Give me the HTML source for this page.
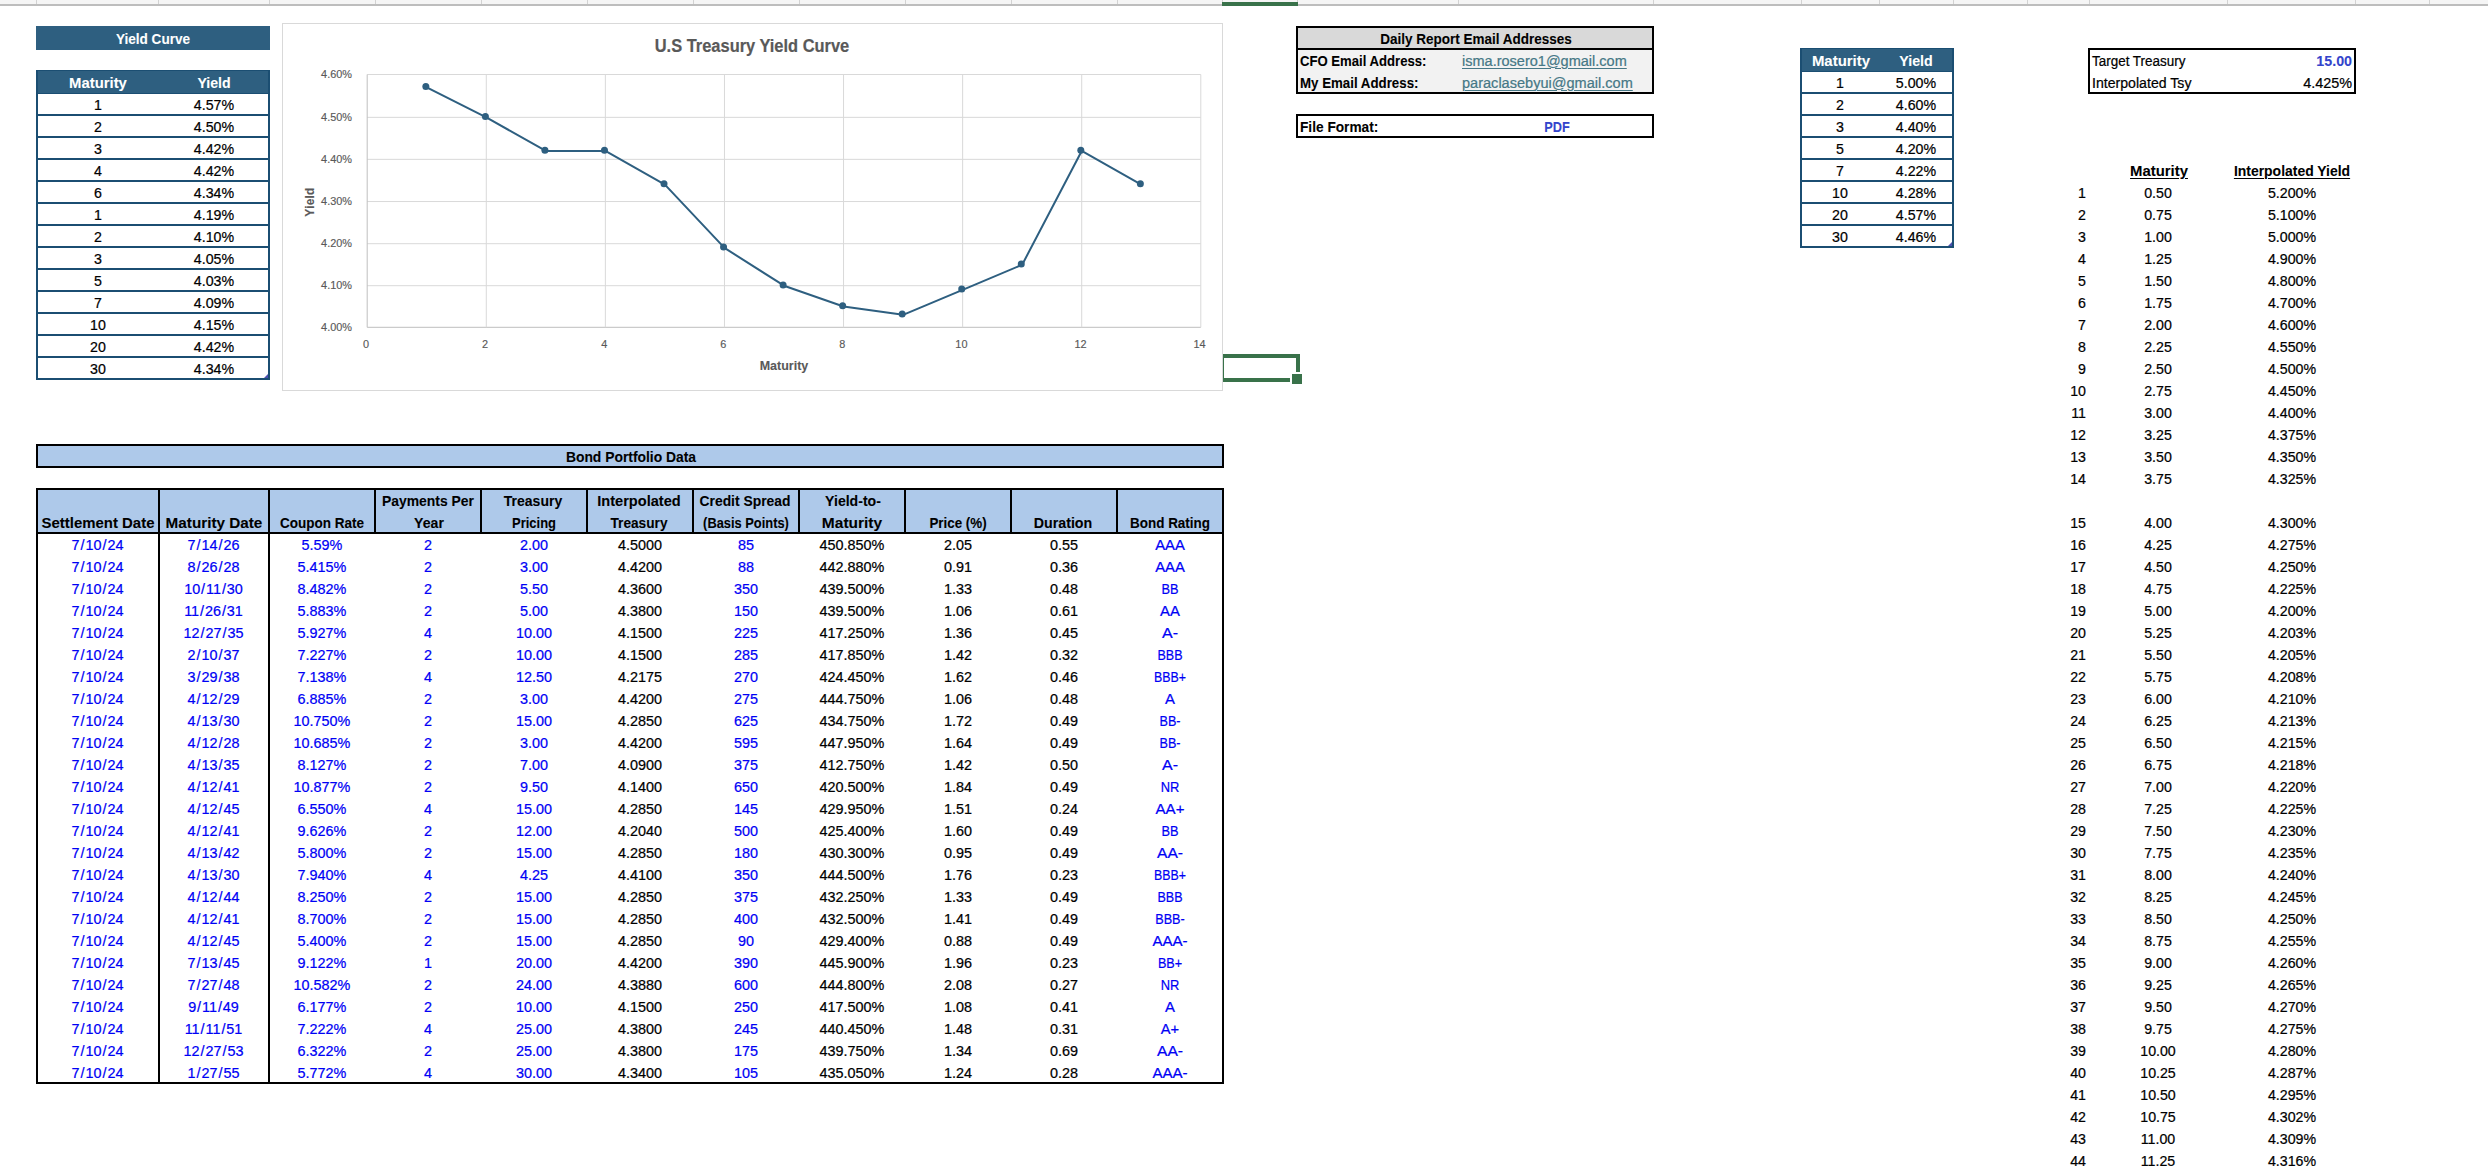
<!DOCTYPE html>
<html><head><meta charset="utf-8"><title>Sheet</title><style>
html,body{margin:0;padding:0;background:#fff}
html{width:2488px;height:1168px;overflow:hidden}
#sheet{position:absolute;left:0;top:0;width:2488px;height:1168px;overflow:hidden;contain:strict}
body{width:2488px;height:1168px;position:relative;overflow:hidden;font-family:"Liberation Sans",sans-serif;color:#000}
.r{position:absolute}
.t{position:absolute;height:22px;line-height:22px;white-space:nowrap;font-size:14.2px;-webkit-text-stroke:0.22px currentColor}
.a{font-size:14.9px}
.ab{font-size:14.9px;font-weight:bold;-webkit-text-stroke:0.08px currentColor}
.c{font-size:14.4px}
.cb{font-size:14.4px;font-weight:bold;-webkit-text-stroke:0.08px currentColor}
.ct{font-size:18.3px;font-weight:bold;color:#595959;-webkit-text-stroke:0.2px currentColor}
.cax{font-size:10.9px;color:#595959;-webkit-text-stroke:0.15px currentColor}
.cal{font-size:12px;font-weight:bold;color:#595959;-webkit-text-stroke:0.1px currentColor}
.s{margin:0 0.95px}
u{text-decoration-thickness:1px;text-underline-offset:2px}
</style></head><body><div id="sheet">
<div class="r" style="left:0.00px;top:0.00px;width:2488.00px;height:4.00px;background:#f5f5f5"></div>
<div class="r" style="left:0.00px;top:4.00px;width:2488.00px;height:1.50px;background:#bdbdbd"></div>
<div class="r" style="left:36.00px;top:0.00px;width:1.00px;height:4.00px;background:#d2d2d2"></div>
<div class="r" style="left:158.00px;top:0.00px;width:1.00px;height:4.00px;background:#d2d2d2"></div>
<div class="r" style="left:269.00px;top:0.00px;width:1.00px;height:4.00px;background:#d2d2d2"></div>
<div class="r" style="left:375.00px;top:0.00px;width:1.00px;height:4.00px;background:#d2d2d2"></div>
<div class="r" style="left:481.00px;top:0.00px;width:1.00px;height:4.00px;background:#d2d2d2"></div>
<div class="r" style="left:587.00px;top:0.00px;width:1.00px;height:4.00px;background:#d2d2d2"></div>
<div class="r" style="left:693.00px;top:0.00px;width:1.00px;height:4.00px;background:#d2d2d2"></div>
<div class="r" style="left:799.00px;top:0.00px;width:1.00px;height:4.00px;background:#d2d2d2"></div>
<div class="r" style="left:905.00px;top:0.00px;width:1.00px;height:4.00px;background:#d2d2d2"></div>
<div class="r" style="left:1011.00px;top:0.00px;width:1.00px;height:4.00px;background:#d2d2d2"></div>
<div class="r" style="left:1117.00px;top:0.00px;width:1.00px;height:4.00px;background:#d2d2d2"></div>
<div class="r" style="left:1222.00px;top:0.00px;width:1.00px;height:4.00px;background:#d2d2d2"></div>
<div class="r" style="left:1296.50px;top:0.00px;width:1.00px;height:4.00px;background:#d2d2d2"></div>
<div class="r" style="left:1458.00px;top:0.00px;width:1.00px;height:4.00px;background:#d2d2d2"></div>
<div class="r" style="left:1653.00px;top:0.00px;width:1.00px;height:4.00px;background:#d2d2d2"></div>
<div class="r" style="left:1800.50px;top:0.00px;width:1.00px;height:4.00px;background:#d2d2d2"></div>
<div class="r" style="left:1878.50px;top:0.00px;width:1.00px;height:4.00px;background:#d2d2d2"></div>
<div class="r" style="left:1952.50px;top:0.00px;width:1.00px;height:4.00px;background:#d2d2d2"></div>
<div class="r" style="left:2026.50px;top:0.00px;width:1.00px;height:4.00px;background:#d2d2d2"></div>
<div class="r" style="left:2088.50px;top:0.00px;width:1.00px;height:4.00px;background:#d2d2d2"></div>
<div class="r" style="left:2226.50px;top:0.00px;width:1.00px;height:4.00px;background:#d2d2d2"></div>
<div class="r" style="left:2354.50px;top:0.00px;width:1.00px;height:4.00px;background:#d2d2d2"></div>
<div class="r" style="left:2428.50px;top:0.00px;width:1.00px;height:4.00px;background:#d2d2d2"></div>
<div class="r" style="left:1222.00px;top:2.00px;width:76.00px;height:3.50px;background:#39724a"></div>
<div class="r" style="left:36.00px;top:26.00px;width:234.00px;height:24.00px;background:#2e5f80"></div>
<div class="t ab" style="left:-47.00px;top:27.80px;width:400px;text-align:center;color:#fff;transform:scaleX(0.9120);transform-origin:center center">Yield Curve</div>
<div class="r" style="left:36.00px;top:70.00px;width:234.00px;height:24.00px;background:#1b4e72"></div>
<div class="r" style="left:38.00px;top:71.00px;width:230.00px;height:22.00px;background:#2e5f80"></div>
<div class="t ab" style="left:-101.80px;top:71.80px;width:400px;text-align:center;color:#fff;transform:scaleX(0.9979);transform-origin:center center">Maturity</div>
<div class="t ab" style="left:14.10px;top:71.80px;width:400px;text-align:center;color:#fff;transform:scaleX(0.9462);transform-origin:center center">Yield</div>
<div class="r" style="left:36.00px;top:70.00px;width:2.00px;height:310.00px;background:#1b4e72"></div>
<div class="r" style="left:268.00px;top:70.00px;width:2.00px;height:310.00px;background:#1b4e72"></div>
<div class="t a" style="left:-101.80px;top:93.80px;width:400px;text-align:center;;transform:scaleX(0.9530);transform-origin:center center">1</div>
<div class="t a" style="left:14.10px;top:93.80px;width:400px;text-align:center;;transform:scaleX(0.9530);transform-origin:center center">4.57%</div>
<div class="r" style="left:36.00px;top:114.00px;width:234.00px;height:2.00px;background:#1b4e72"></div>
<div class="t a" style="left:-101.80px;top:115.80px;width:400px;text-align:center;;transform:scaleX(0.9530);transform-origin:center center">2</div>
<div class="t a" style="left:14.10px;top:115.80px;width:400px;text-align:center;;transform:scaleX(0.9530);transform-origin:center center">4.50%</div>
<div class="r" style="left:36.00px;top:136.00px;width:234.00px;height:2.00px;background:#1b4e72"></div>
<div class="t a" style="left:-101.80px;top:137.80px;width:400px;text-align:center;;transform:scaleX(0.9530);transform-origin:center center">3</div>
<div class="t a" style="left:14.10px;top:137.80px;width:400px;text-align:center;;transform:scaleX(0.9530);transform-origin:center center">4.42%</div>
<div class="r" style="left:36.00px;top:158.00px;width:234.00px;height:2.00px;background:#1b4e72"></div>
<div class="t a" style="left:-101.80px;top:159.80px;width:400px;text-align:center;;transform:scaleX(0.9530);transform-origin:center center">4</div>
<div class="t a" style="left:14.10px;top:159.80px;width:400px;text-align:center;;transform:scaleX(0.9530);transform-origin:center center">4.42%</div>
<div class="r" style="left:36.00px;top:180.00px;width:234.00px;height:2.00px;background:#1b4e72"></div>
<div class="t a" style="left:-101.80px;top:181.80px;width:400px;text-align:center;;transform:scaleX(0.9530);transform-origin:center center">6</div>
<div class="t a" style="left:14.10px;top:181.80px;width:400px;text-align:center;;transform:scaleX(0.9530);transform-origin:center center">4.34%</div>
<div class="r" style="left:36.00px;top:202.00px;width:234.00px;height:2.00px;background:#1b4e72"></div>
<div class="t a" style="left:-101.80px;top:203.80px;width:400px;text-align:center;;transform:scaleX(0.9530);transform-origin:center center">1</div>
<div class="t a" style="left:14.10px;top:203.80px;width:400px;text-align:center;;transform:scaleX(0.9530);transform-origin:center center">4.19%</div>
<div class="r" style="left:36.00px;top:224.00px;width:234.00px;height:2.00px;background:#1b4e72"></div>
<div class="t a" style="left:-101.80px;top:225.80px;width:400px;text-align:center;;transform:scaleX(0.9530);transform-origin:center center">2</div>
<div class="t a" style="left:14.10px;top:225.80px;width:400px;text-align:center;;transform:scaleX(0.9530);transform-origin:center center">4.10%</div>
<div class="r" style="left:36.00px;top:246.00px;width:234.00px;height:2.00px;background:#1b4e72"></div>
<div class="t a" style="left:-101.80px;top:247.80px;width:400px;text-align:center;;transform:scaleX(0.9530);transform-origin:center center">3</div>
<div class="t a" style="left:14.10px;top:247.80px;width:400px;text-align:center;;transform:scaleX(0.9530);transform-origin:center center">4.05%</div>
<div class="r" style="left:36.00px;top:268.00px;width:234.00px;height:2.00px;background:#1b4e72"></div>
<div class="t a" style="left:-101.80px;top:269.80px;width:400px;text-align:center;;transform:scaleX(0.9530);transform-origin:center center">5</div>
<div class="t a" style="left:14.10px;top:269.80px;width:400px;text-align:center;;transform:scaleX(0.9530);transform-origin:center center">4.03%</div>
<div class="r" style="left:36.00px;top:290.00px;width:234.00px;height:2.00px;background:#1b4e72"></div>
<div class="t a" style="left:-101.80px;top:291.80px;width:400px;text-align:center;;transform:scaleX(0.9530);transform-origin:center center">7</div>
<div class="t a" style="left:14.10px;top:291.80px;width:400px;text-align:center;;transform:scaleX(0.9530);transform-origin:center center">4.09%</div>
<div class="r" style="left:36.00px;top:312.00px;width:234.00px;height:2.00px;background:#1b4e72"></div>
<div class="t a" style="left:-101.80px;top:313.80px;width:400px;text-align:center;;transform:scaleX(0.9530);transform-origin:center center">10</div>
<div class="t a" style="left:14.10px;top:313.80px;width:400px;text-align:center;;transform:scaleX(0.9530);transform-origin:center center">4.15%</div>
<div class="r" style="left:36.00px;top:334.00px;width:234.00px;height:2.00px;background:#1b4e72"></div>
<div class="t a" style="left:-101.80px;top:335.80px;width:400px;text-align:center;;transform:scaleX(0.9530);transform-origin:center center">20</div>
<div class="t a" style="left:14.10px;top:335.80px;width:400px;text-align:center;;transform:scaleX(0.9530);transform-origin:center center">4.42%</div>
<div class="r" style="left:36.00px;top:356.00px;width:234.00px;height:2.00px;background:#1b4e72"></div>
<div class="t a" style="left:-101.80px;top:357.80px;width:400px;text-align:center;;transform:scaleX(0.9530);transform-origin:center center">30</div>
<div class="t a" style="left:14.10px;top:357.80px;width:400px;text-align:center;;transform:scaleX(0.9530);transform-origin:center center">4.34%</div>
<div class="r" style="left:36.00px;top:378.00px;width:234.00px;height:2.00px;background:#1b4e72"></div>
<div class="r" style="left:264.0px;top:374.0px;width:0;height:0;border-left:4px solid transparent;border-bottom:4px solid #4b4fb0"></div>
<div class="r" style="left:1800.00px;top:48.00px;width:154.00px;height:24.00px;background:#1b4e72"></div>
<div class="r" style="left:1802.00px;top:49.00px;width:150.00px;height:22.00px;background:#2e5f80"></div>
<div class="t ab" style="left:1640.70px;top:49.80px;width:400px;text-align:center;color:#fff;transform:scaleX(1.0049);transform-origin:center center">Maturity</div>
<div class="t ab" style="left:1716.00px;top:49.80px;width:400px;text-align:center;color:#fff;transform:scaleX(0.9550);transform-origin:center center">Yield</div>
<div class="r" style="left:1800.00px;top:48.00px;width:2.00px;height:200.00px;background:#1b4e72"></div>
<div class="r" style="left:1952.00px;top:48.00px;width:2.00px;height:200.00px;background:#1b4e72"></div>
<div class="t a" style="left:1639.80px;top:71.80px;width:400px;text-align:center;;transform:scaleX(0.9530);transform-origin:center center">1</div>
<div class="t a" style="left:1716.00px;top:71.80px;width:400px;text-align:center;;transform:scaleX(0.9530);transform-origin:center center">5.00%</div>
<div class="r" style="left:1800.00px;top:92.00px;width:154.00px;height:2.00px;background:#1b4e72"></div>
<div class="t a" style="left:1639.80px;top:93.80px;width:400px;text-align:center;;transform:scaleX(0.9530);transform-origin:center center">2</div>
<div class="t a" style="left:1716.00px;top:93.80px;width:400px;text-align:center;;transform:scaleX(0.9530);transform-origin:center center">4.60%</div>
<div class="r" style="left:1800.00px;top:114.00px;width:154.00px;height:2.00px;background:#1b4e72"></div>
<div class="t a" style="left:1639.80px;top:115.80px;width:400px;text-align:center;;transform:scaleX(0.9530);transform-origin:center center">3</div>
<div class="t a" style="left:1716.00px;top:115.80px;width:400px;text-align:center;;transform:scaleX(0.9530);transform-origin:center center">4.40%</div>
<div class="r" style="left:1800.00px;top:136.00px;width:154.00px;height:2.00px;background:#1b4e72"></div>
<div class="t a" style="left:1639.80px;top:137.80px;width:400px;text-align:center;;transform:scaleX(0.9530);transform-origin:center center">5</div>
<div class="t a" style="left:1716.00px;top:137.80px;width:400px;text-align:center;;transform:scaleX(0.9530);transform-origin:center center">4.20%</div>
<div class="r" style="left:1800.00px;top:158.00px;width:154.00px;height:2.00px;background:#1b4e72"></div>
<div class="t a" style="left:1639.80px;top:159.80px;width:400px;text-align:center;;transform:scaleX(0.9530);transform-origin:center center">7</div>
<div class="t a" style="left:1716.00px;top:159.80px;width:400px;text-align:center;;transform:scaleX(0.9530);transform-origin:center center">4.22%</div>
<div class="r" style="left:1800.00px;top:180.00px;width:154.00px;height:2.00px;background:#1b4e72"></div>
<div class="t a" style="left:1639.80px;top:181.80px;width:400px;text-align:center;;transform:scaleX(0.9530);transform-origin:center center">10</div>
<div class="t a" style="left:1716.00px;top:181.80px;width:400px;text-align:center;;transform:scaleX(0.9530);transform-origin:center center">4.28%</div>
<div class="r" style="left:1800.00px;top:202.00px;width:154.00px;height:2.00px;background:#1b4e72"></div>
<div class="t a" style="left:1639.80px;top:203.80px;width:400px;text-align:center;;transform:scaleX(0.9530);transform-origin:center center">20</div>
<div class="t a" style="left:1716.00px;top:203.80px;width:400px;text-align:center;;transform:scaleX(0.9530);transform-origin:center center">4.57%</div>
<div class="r" style="left:1800.00px;top:224.00px;width:154.00px;height:2.00px;background:#1b4e72"></div>
<div class="t a" style="left:1639.80px;top:225.80px;width:400px;text-align:center;;transform:scaleX(0.9530);transform-origin:center center">30</div>
<div class="t a" style="left:1716.00px;top:225.80px;width:400px;text-align:center;;transform:scaleX(0.9530);transform-origin:center center">4.46%</div>
<div class="r" style="left:1800.00px;top:246.00px;width:154.00px;height:2.00px;background:#1b4e72"></div>
<div class="r" style="left:1948.0px;top:242.0px;width:0;height:0;border-left:4px solid transparent;border-bottom:4px solid #4b4fb0"></div>
<svg class="r" style="left:0;top:0" width="2488" height="400" viewBox="0 0 2488 400"><rect x="282.5" y="23.5" width="940.0" height="367.0" fill="#fff" stroke="#d9d9d9" stroke-width="1"/><line x1="367.2" y1="74.50" x2="1200.8" y2="74.50" stroke="#d9d9d9" stroke-width="1"/><line x1="367.2" y1="117.35" x2="1200.8" y2="117.35" stroke="#d9d9d9" stroke-width="1"/><line x1="367.2" y1="159.35" x2="1200.8" y2="159.35" stroke="#d9d9d9" stroke-width="1"/><line x1="367.2" y1="201.55" x2="1200.8" y2="201.55" stroke="#d9d9d9" stroke-width="1"/><line x1="367.2" y1="243.70" x2="1200.8" y2="243.70" stroke="#d9d9d9" stroke-width="1"/><line x1="367.2" y1="285.70" x2="1200.8" y2="285.70" stroke="#d9d9d9" stroke-width="1"/><line x1="367.2" y1="327.30" x2="1200.8" y2="327.30" stroke="#bfbfbf" stroke-width="1"/><line x1="367.20" y1="74.5" x2="367.20" y2="327.3" stroke="#bfbfbf" stroke-width="1"/><line x1="486.29" y1="74.5" x2="486.29" y2="327.3" stroke="#d9d9d9" stroke-width="1"/><line x1="605.37" y1="74.5" x2="605.37" y2="327.3" stroke="#d9d9d9" stroke-width="1"/><line x1="724.46" y1="74.5" x2="724.46" y2="327.3" stroke="#d9d9d9" stroke-width="1"/><line x1="843.54" y1="74.5" x2="843.54" y2="327.3" stroke="#d9d9d9" stroke-width="1"/><line x1="962.63" y1="74.5" x2="962.63" y2="327.3" stroke="#d9d9d9" stroke-width="1"/><line x1="1081.71" y1="74.5" x2="1081.71" y2="327.3" stroke="#d9d9d9" stroke-width="1"/><line x1="1200.80" y1="74.5" x2="1200.80" y2="327.3" stroke="#d9d9d9" stroke-width="1"/><polyline points="426.74,87.35 486.29,117.35 545.83,150.95 605.37,150.95 664.91,184.67 724.46,247.90 784.00,285.70 843.54,306.50 903.09,314.82 962.63,289.86 1022.17,264.70 1081.71,150.95 1141.26,184.67" fill="none" stroke="#2e5f80" stroke-width="2" stroke-linejoin="round" stroke-linecap="round"/><circle cx="425.84" cy="86.55" r="3.5" fill="#2e5f80"/><circle cx="485.39" cy="116.55" r="3.5" fill="#2e5f80"/><circle cx="544.93" cy="150.15" r="3.5" fill="#2e5f80"/><circle cx="604.47" cy="150.15" r="3.5" fill="#2e5f80"/><circle cx="664.01" cy="183.87" r="3.5" fill="#2e5f80"/><circle cx="723.56" cy="247.10" r="3.5" fill="#2e5f80"/><circle cx="783.10" cy="284.90" r="3.5" fill="#2e5f80"/><circle cx="842.64" cy="305.70" r="3.5" fill="#2e5f80"/><circle cx="902.19" cy="314.02" r="3.5" fill="#2e5f80"/><circle cx="961.73" cy="289.06" r="3.5" fill="#2e5f80"/><circle cx="1021.27" cy="263.90" r="3.5" fill="#2e5f80"/><circle cx="1080.81" cy="150.15" r="3.5" fill="#2e5f80"/><circle cx="1140.36" cy="183.87" r="3.5" fill="#2e5f80"/></svg>
<div class="t ct" style="left:551.70px;top:34.60px;width:400px;text-align:center;;transform:scaleX(0.8986);transform-origin:center center">U.S Treasury Yield Curve</div>
<div class="t cax" style="left:252.00px;top:63.20px;width:100px;text-align:right;">4.60%</div>
<div class="t cax" style="left:252.00px;top:106.05px;width:100px;text-align:right;">4.50%</div>
<div class="t cax" style="left:252.00px;top:148.05px;width:100px;text-align:right;">4.40%</div>
<div class="t cax" style="left:252.00px;top:190.25px;width:100px;text-align:right;">4.30%</div>
<div class="t cax" style="left:252.00px;top:232.40px;width:100px;text-align:right;">4.20%</div>
<div class="t cax" style="left:252.00px;top:274.40px;width:100px;text-align:right;">4.10%</div>
<div class="t cax" style="left:252.00px;top:316.00px;width:100px;text-align:right;">4.00%</div>
<div class="t cax" style="left:336.00px;top:333.00px;width:60px;text-align:center;">0</div>
<div class="t cax" style="left:455.09px;top:333.00px;width:60px;text-align:center;">2</div>
<div class="t cax" style="left:574.17px;top:333.00px;width:60px;text-align:center;">4</div>
<div class="t cax" style="left:693.26px;top:333.00px;width:60px;text-align:center;">6</div>
<div class="t cax" style="left:812.34px;top:333.00px;width:60px;text-align:center;">8</div>
<div class="t cax" style="left:931.43px;top:333.00px;width:60px;text-align:center;">10</div>
<div class="t cax" style="left:1050.51px;top:333.00px;width:60px;text-align:center;">12</div>
<div class="t cax" style="left:1169.60px;top:333.00px;width:60px;text-align:center;">14</div>
<div class="t cal" style="left:733.50px;top:354.50px;width:100px;text-align:center;;transform:scaleX(1.0400);transform-origin:center center">Maturity</div>
<div class="t cal" style="left:259.5px;top:190.5px;width:100px;text-align:center;transform:rotate(-90deg);letter-spacing:0.2px">Yield</div>
<div class="r" style="left:1223.00px;top:354.00px;width:77.00px;height:3.70px;background:#39724a"></div>
<div class="r" style="left:1296.20px;top:354.00px;width:3.80px;height:18.00px;background:#39724a"></div>
<div class="r" style="left:1223.00px;top:378.20px;width:67.00px;height:3.80px;background:#39724a"></div>
<div class="r" style="left:1223.00px;top:354.00px;width:1.00px;height:28.00px;background:#39724a"></div>
<div class="r" style="left:1292.00px;top:374.00px;width:10.00px;height:10.00px;background:#39724a"></div>
<div class="r" style="left:1296.00px;top:26.00px;width:358.00px;height:68.00px;background:#f2f2f2;border:2px solid #000;box-sizing:border-box"></div>
<div class="r" style="left:1298.00px;top:28.00px;width:354.00px;height:20.00px;background:#d9d9d9"></div>
<div class="r" style="left:1298.00px;top:48.00px;width:354.00px;height:2.00px;background:#000"></div>
<div class="t ab" style="left:1275.50px;top:27.50px;width:400px;text-align:center;;transform:scaleX(0.9058);transform-origin:center center">Daily Report Email Addresses</div>
<div class="t ab" style="left:1300.00px;top:49.50px;width:400px;text-align:left;;transform:scaleX(0.8818);transform-origin:left center">CFO Email Address:</div>
<div class="t ab" style="left:1300.00px;top:71.50px;width:400px;text-align:left;;transform:scaleX(0.8930);transform-origin:left center">My Email Address:</div>
<div class="t a" style="left:1462.00px;top:49.50px;width:400px;text-align:left;color:#467886;transform:scaleX(0.9747);transform-origin:left center"><u>isma.rosero1@gmail.com</u></div>
<div class="t a" style="left:1462.00px;top:71.50px;width:400px;text-align:left;color:#467886;transform:scaleX(0.9767);transform-origin:left center"><u>paraclasebyui@gmail.com</u></div>
<div class="r" style="left:1296.00px;top:114.00px;width:358.00px;height:24.00px;background:#fff;border:2px solid #000;box-sizing:border-box"></div>
<div class="t ab" style="left:1300.00px;top:115.50px;width:400px;text-align:left;;transform:scaleX(0.9190);transform-origin:left center">File Format:</div>
<div class="t ab" style="left:1357.20px;top:115.50px;width:400px;text-align:center;color:#3344cc;transform:scaleX(0.8543);transform-origin:center center">PDF</div>
<div class="r" style="left:2088.00px;top:48.00px;width:268.00px;height:46.00px;background:#fff;border:2px solid #000;box-sizing:border-box"></div>
<div class="t a" style="left:2092.00px;top:49.50px;width:400px;text-align:left;;transform:scaleX(0.9029);transform-origin:left center">Target Treasury</div>
<div class="t a" style="left:2092.00px;top:71.50px;width:400px;text-align:left;;transform:scaleX(0.9484);transform-origin:left center">Interpolated Tsy</div>
<div class="t ab" style="left:1951.80px;top:49.50px;width:400px;text-align:right;color:#3344cc;transform:scaleX(0.9568);transform-origin:right center">15.00</div>
<div class="t a" style="left:1951.80px;top:71.50px;width:400px;text-align:right;;transform:scaleX(0.9654);transform-origin:right center">4.425%</div>
<div class="t ab" style="left:1959.00px;top:159.50px;width:400px;text-align:center;;transform:scaleX(0.9996);transform-origin:center center"><u>Maturity</u></div>
<div class="t ab" style="left:2092.00px;top:159.50px;width:400px;text-align:center;;transform:scaleX(0.9364);transform-origin:center center"><u>Interpolated Yield</u></div>
<div class="t a" style="left:1986.00px;top:181.70px;width:100px;text-align:right;;transform:scaleX(0.9530);transform-origin:right center">1</div>
<div class="t a" style="left:2107.80px;top:181.70px;width:100px;text-align:center;;transform:scaleX(0.9530);transform-origin:center center">0.50</div>
<div class="t a" style="left:2242.00px;top:181.70px;width:100px;text-align:center;;transform:scaleX(0.9530);transform-origin:center center">5.200%</div>
<div class="t a" style="left:1986.00px;top:203.70px;width:100px;text-align:right;;transform:scaleX(0.9530);transform-origin:right center">2</div>
<div class="t a" style="left:2107.80px;top:203.70px;width:100px;text-align:center;;transform:scaleX(0.9530);transform-origin:center center">0.75</div>
<div class="t a" style="left:2242.00px;top:203.70px;width:100px;text-align:center;;transform:scaleX(0.9530);transform-origin:center center">5.100%</div>
<div class="t a" style="left:1986.00px;top:225.70px;width:100px;text-align:right;;transform:scaleX(0.9530);transform-origin:right center">3</div>
<div class="t a" style="left:2107.80px;top:225.70px;width:100px;text-align:center;;transform:scaleX(0.9530);transform-origin:center center">1.00</div>
<div class="t a" style="left:2242.00px;top:225.70px;width:100px;text-align:center;;transform:scaleX(0.9530);transform-origin:center center">5.000%</div>
<div class="t a" style="left:1986.00px;top:247.70px;width:100px;text-align:right;;transform:scaleX(0.9530);transform-origin:right center">4</div>
<div class="t a" style="left:2107.80px;top:247.70px;width:100px;text-align:center;;transform:scaleX(0.9530);transform-origin:center center">1.25</div>
<div class="t a" style="left:2242.00px;top:247.70px;width:100px;text-align:center;;transform:scaleX(0.9530);transform-origin:center center">4.900%</div>
<div class="t a" style="left:1986.00px;top:269.70px;width:100px;text-align:right;;transform:scaleX(0.9530);transform-origin:right center">5</div>
<div class="t a" style="left:2107.80px;top:269.70px;width:100px;text-align:center;;transform:scaleX(0.9530);transform-origin:center center">1.50</div>
<div class="t a" style="left:2242.00px;top:269.70px;width:100px;text-align:center;;transform:scaleX(0.9530);transform-origin:center center">4.800%</div>
<div class="t a" style="left:1986.00px;top:291.70px;width:100px;text-align:right;;transform:scaleX(0.9530);transform-origin:right center">6</div>
<div class="t a" style="left:2107.80px;top:291.70px;width:100px;text-align:center;;transform:scaleX(0.9530);transform-origin:center center">1.75</div>
<div class="t a" style="left:2242.00px;top:291.70px;width:100px;text-align:center;;transform:scaleX(0.9530);transform-origin:center center">4.700%</div>
<div class="t a" style="left:1986.00px;top:313.70px;width:100px;text-align:right;;transform:scaleX(0.9530);transform-origin:right center">7</div>
<div class="t a" style="left:2107.80px;top:313.70px;width:100px;text-align:center;;transform:scaleX(0.9530);transform-origin:center center">2.00</div>
<div class="t a" style="left:2242.00px;top:313.70px;width:100px;text-align:center;;transform:scaleX(0.9530);transform-origin:center center">4.600%</div>
<div class="t a" style="left:1986.00px;top:335.70px;width:100px;text-align:right;;transform:scaleX(0.9530);transform-origin:right center">8</div>
<div class="t a" style="left:2107.80px;top:335.70px;width:100px;text-align:center;;transform:scaleX(0.9530);transform-origin:center center">2.25</div>
<div class="t a" style="left:2242.00px;top:335.70px;width:100px;text-align:center;;transform:scaleX(0.9530);transform-origin:center center">4.550%</div>
<div class="t a" style="left:1986.00px;top:357.70px;width:100px;text-align:right;;transform:scaleX(0.9530);transform-origin:right center">9</div>
<div class="t a" style="left:2107.80px;top:357.70px;width:100px;text-align:center;;transform:scaleX(0.9530);transform-origin:center center">2.50</div>
<div class="t a" style="left:2242.00px;top:357.70px;width:100px;text-align:center;;transform:scaleX(0.9530);transform-origin:center center">4.500%</div>
<div class="t a" style="left:1986.00px;top:379.70px;width:100px;text-align:right;;transform:scaleX(0.9530);transform-origin:right center">10</div>
<div class="t a" style="left:2107.80px;top:379.70px;width:100px;text-align:center;;transform:scaleX(0.9530);transform-origin:center center">2.75</div>
<div class="t a" style="left:2242.00px;top:379.70px;width:100px;text-align:center;;transform:scaleX(0.9530);transform-origin:center center">4.450%</div>
<div class="t a" style="left:1986.00px;top:401.70px;width:100px;text-align:right;;transform:scaleX(0.9530);transform-origin:right center">11</div>
<div class="t a" style="left:2107.80px;top:401.70px;width:100px;text-align:center;;transform:scaleX(0.9530);transform-origin:center center">3.00</div>
<div class="t a" style="left:2242.00px;top:401.70px;width:100px;text-align:center;;transform:scaleX(0.9530);transform-origin:center center">4.400%</div>
<div class="t a" style="left:1986.00px;top:423.70px;width:100px;text-align:right;;transform:scaleX(0.9530);transform-origin:right center">12</div>
<div class="t a" style="left:2107.80px;top:423.70px;width:100px;text-align:center;;transform:scaleX(0.9530);transform-origin:center center">3.25</div>
<div class="t a" style="left:2242.00px;top:423.70px;width:100px;text-align:center;;transform:scaleX(0.9530);transform-origin:center center">4.375%</div>
<div class="t a" style="left:1986.00px;top:445.70px;width:100px;text-align:right;;transform:scaleX(0.9530);transform-origin:right center">13</div>
<div class="t a" style="left:2107.80px;top:445.70px;width:100px;text-align:center;;transform:scaleX(0.9530);transform-origin:center center">3.50</div>
<div class="t a" style="left:2242.00px;top:445.70px;width:100px;text-align:center;;transform:scaleX(0.9530);transform-origin:center center">4.350%</div>
<div class="t a" style="left:1986.00px;top:467.70px;width:100px;text-align:right;;transform:scaleX(0.9530);transform-origin:right center">14</div>
<div class="t a" style="left:2107.80px;top:467.70px;width:100px;text-align:center;;transform:scaleX(0.9530);transform-origin:center center">3.75</div>
<div class="t a" style="left:2242.00px;top:467.70px;width:100px;text-align:center;;transform:scaleX(0.9530);transform-origin:center center">4.325%</div>
<div class="t a" style="left:1986.00px;top:511.70px;width:100px;text-align:right;;transform:scaleX(0.9530);transform-origin:right center">15</div>
<div class="t a" style="left:2107.80px;top:511.70px;width:100px;text-align:center;;transform:scaleX(0.9530);transform-origin:center center">4.00</div>
<div class="t a" style="left:2242.00px;top:511.70px;width:100px;text-align:center;;transform:scaleX(0.9530);transform-origin:center center">4.300%</div>
<div class="t a" style="left:1986.00px;top:533.70px;width:100px;text-align:right;;transform:scaleX(0.9530);transform-origin:right center">16</div>
<div class="t a" style="left:2107.80px;top:533.70px;width:100px;text-align:center;;transform:scaleX(0.9530);transform-origin:center center">4.25</div>
<div class="t a" style="left:2242.00px;top:533.70px;width:100px;text-align:center;;transform:scaleX(0.9530);transform-origin:center center">4.275%</div>
<div class="t a" style="left:1986.00px;top:555.70px;width:100px;text-align:right;;transform:scaleX(0.9530);transform-origin:right center">17</div>
<div class="t a" style="left:2107.80px;top:555.70px;width:100px;text-align:center;;transform:scaleX(0.9530);transform-origin:center center">4.50</div>
<div class="t a" style="left:2242.00px;top:555.70px;width:100px;text-align:center;;transform:scaleX(0.9530);transform-origin:center center">4.250%</div>
<div class="t a" style="left:1986.00px;top:577.70px;width:100px;text-align:right;;transform:scaleX(0.9530);transform-origin:right center">18</div>
<div class="t a" style="left:2107.80px;top:577.70px;width:100px;text-align:center;;transform:scaleX(0.9530);transform-origin:center center">4.75</div>
<div class="t a" style="left:2242.00px;top:577.70px;width:100px;text-align:center;;transform:scaleX(0.9530);transform-origin:center center">4.225%</div>
<div class="t a" style="left:1986.00px;top:599.70px;width:100px;text-align:right;;transform:scaleX(0.9530);transform-origin:right center">19</div>
<div class="t a" style="left:2107.80px;top:599.70px;width:100px;text-align:center;;transform:scaleX(0.9530);transform-origin:center center">5.00</div>
<div class="t a" style="left:2242.00px;top:599.70px;width:100px;text-align:center;;transform:scaleX(0.9530);transform-origin:center center">4.200%</div>
<div class="t a" style="left:1986.00px;top:621.70px;width:100px;text-align:right;;transform:scaleX(0.9530);transform-origin:right center">20</div>
<div class="t a" style="left:2107.80px;top:621.70px;width:100px;text-align:center;;transform:scaleX(0.9530);transform-origin:center center">5.25</div>
<div class="t a" style="left:2242.00px;top:621.70px;width:100px;text-align:center;;transform:scaleX(0.9530);transform-origin:center center">4.203%</div>
<div class="t a" style="left:1986.00px;top:643.70px;width:100px;text-align:right;;transform:scaleX(0.9530);transform-origin:right center">21</div>
<div class="t a" style="left:2107.80px;top:643.70px;width:100px;text-align:center;;transform:scaleX(0.9530);transform-origin:center center">5.50</div>
<div class="t a" style="left:2242.00px;top:643.70px;width:100px;text-align:center;;transform:scaleX(0.9530);transform-origin:center center">4.205%</div>
<div class="t a" style="left:1986.00px;top:665.70px;width:100px;text-align:right;;transform:scaleX(0.9530);transform-origin:right center">22</div>
<div class="t a" style="left:2107.80px;top:665.70px;width:100px;text-align:center;;transform:scaleX(0.9530);transform-origin:center center">5.75</div>
<div class="t a" style="left:2242.00px;top:665.70px;width:100px;text-align:center;;transform:scaleX(0.9530);transform-origin:center center">4.208%</div>
<div class="t a" style="left:1986.00px;top:687.70px;width:100px;text-align:right;;transform:scaleX(0.9530);transform-origin:right center">23</div>
<div class="t a" style="left:2107.80px;top:687.70px;width:100px;text-align:center;;transform:scaleX(0.9530);transform-origin:center center">6.00</div>
<div class="t a" style="left:2242.00px;top:687.70px;width:100px;text-align:center;;transform:scaleX(0.9530);transform-origin:center center">4.210%</div>
<div class="t a" style="left:1986.00px;top:709.70px;width:100px;text-align:right;;transform:scaleX(0.9530);transform-origin:right center">24</div>
<div class="t a" style="left:2107.80px;top:709.70px;width:100px;text-align:center;;transform:scaleX(0.9530);transform-origin:center center">6.25</div>
<div class="t a" style="left:2242.00px;top:709.70px;width:100px;text-align:center;;transform:scaleX(0.9530);transform-origin:center center">4.213%</div>
<div class="t a" style="left:1986.00px;top:731.70px;width:100px;text-align:right;;transform:scaleX(0.9530);transform-origin:right center">25</div>
<div class="t a" style="left:2107.80px;top:731.70px;width:100px;text-align:center;;transform:scaleX(0.9530);transform-origin:center center">6.50</div>
<div class="t a" style="left:2242.00px;top:731.70px;width:100px;text-align:center;;transform:scaleX(0.9530);transform-origin:center center">4.215%</div>
<div class="t a" style="left:1986.00px;top:753.70px;width:100px;text-align:right;;transform:scaleX(0.9530);transform-origin:right center">26</div>
<div class="t a" style="left:2107.80px;top:753.70px;width:100px;text-align:center;;transform:scaleX(0.9530);transform-origin:center center">6.75</div>
<div class="t a" style="left:2242.00px;top:753.70px;width:100px;text-align:center;;transform:scaleX(0.9530);transform-origin:center center">4.218%</div>
<div class="t a" style="left:1986.00px;top:775.70px;width:100px;text-align:right;;transform:scaleX(0.9530);transform-origin:right center">27</div>
<div class="t a" style="left:2107.80px;top:775.70px;width:100px;text-align:center;;transform:scaleX(0.9530);transform-origin:center center">7.00</div>
<div class="t a" style="left:2242.00px;top:775.70px;width:100px;text-align:center;;transform:scaleX(0.9530);transform-origin:center center">4.220%</div>
<div class="t a" style="left:1986.00px;top:797.70px;width:100px;text-align:right;;transform:scaleX(0.9530);transform-origin:right center">28</div>
<div class="t a" style="left:2107.80px;top:797.70px;width:100px;text-align:center;;transform:scaleX(0.9530);transform-origin:center center">7.25</div>
<div class="t a" style="left:2242.00px;top:797.70px;width:100px;text-align:center;;transform:scaleX(0.9530);transform-origin:center center">4.225%</div>
<div class="t a" style="left:1986.00px;top:819.70px;width:100px;text-align:right;;transform:scaleX(0.9530);transform-origin:right center">29</div>
<div class="t a" style="left:2107.80px;top:819.70px;width:100px;text-align:center;;transform:scaleX(0.9530);transform-origin:center center">7.50</div>
<div class="t a" style="left:2242.00px;top:819.70px;width:100px;text-align:center;;transform:scaleX(0.9530);transform-origin:center center">4.230%</div>
<div class="t a" style="left:1986.00px;top:841.70px;width:100px;text-align:right;;transform:scaleX(0.9530);transform-origin:right center">30</div>
<div class="t a" style="left:2107.80px;top:841.70px;width:100px;text-align:center;;transform:scaleX(0.9530);transform-origin:center center">7.75</div>
<div class="t a" style="left:2242.00px;top:841.70px;width:100px;text-align:center;;transform:scaleX(0.9530);transform-origin:center center">4.235%</div>
<div class="t a" style="left:1986.00px;top:863.70px;width:100px;text-align:right;;transform:scaleX(0.9530);transform-origin:right center">31</div>
<div class="t a" style="left:2107.80px;top:863.70px;width:100px;text-align:center;;transform:scaleX(0.9530);transform-origin:center center">8.00</div>
<div class="t a" style="left:2242.00px;top:863.70px;width:100px;text-align:center;;transform:scaleX(0.9530);transform-origin:center center">4.240%</div>
<div class="t a" style="left:1986.00px;top:885.70px;width:100px;text-align:right;;transform:scaleX(0.9530);transform-origin:right center">32</div>
<div class="t a" style="left:2107.80px;top:885.70px;width:100px;text-align:center;;transform:scaleX(0.9530);transform-origin:center center">8.25</div>
<div class="t a" style="left:2242.00px;top:885.70px;width:100px;text-align:center;;transform:scaleX(0.9530);transform-origin:center center">4.245%</div>
<div class="t a" style="left:1986.00px;top:907.70px;width:100px;text-align:right;;transform:scaleX(0.9530);transform-origin:right center">33</div>
<div class="t a" style="left:2107.80px;top:907.70px;width:100px;text-align:center;;transform:scaleX(0.9530);transform-origin:center center">8.50</div>
<div class="t a" style="left:2242.00px;top:907.70px;width:100px;text-align:center;;transform:scaleX(0.9530);transform-origin:center center">4.250%</div>
<div class="t a" style="left:1986.00px;top:929.70px;width:100px;text-align:right;;transform:scaleX(0.9530);transform-origin:right center">34</div>
<div class="t a" style="left:2107.80px;top:929.70px;width:100px;text-align:center;;transform:scaleX(0.9530);transform-origin:center center">8.75</div>
<div class="t a" style="left:2242.00px;top:929.70px;width:100px;text-align:center;;transform:scaleX(0.9530);transform-origin:center center">4.255%</div>
<div class="t a" style="left:1986.00px;top:951.70px;width:100px;text-align:right;;transform:scaleX(0.9530);transform-origin:right center">35</div>
<div class="t a" style="left:2107.80px;top:951.70px;width:100px;text-align:center;;transform:scaleX(0.9530);transform-origin:center center">9.00</div>
<div class="t a" style="left:2242.00px;top:951.70px;width:100px;text-align:center;;transform:scaleX(0.9530);transform-origin:center center">4.260%</div>
<div class="t a" style="left:1986.00px;top:973.70px;width:100px;text-align:right;;transform:scaleX(0.9530);transform-origin:right center">36</div>
<div class="t a" style="left:2107.80px;top:973.70px;width:100px;text-align:center;;transform:scaleX(0.9530);transform-origin:center center">9.25</div>
<div class="t a" style="left:2242.00px;top:973.70px;width:100px;text-align:center;;transform:scaleX(0.9530);transform-origin:center center">4.265%</div>
<div class="t a" style="left:1986.00px;top:995.70px;width:100px;text-align:right;;transform:scaleX(0.9530);transform-origin:right center">37</div>
<div class="t a" style="left:2107.80px;top:995.70px;width:100px;text-align:center;;transform:scaleX(0.9530);transform-origin:center center">9.50</div>
<div class="t a" style="left:2242.00px;top:995.70px;width:100px;text-align:center;;transform:scaleX(0.9530);transform-origin:center center">4.270%</div>
<div class="t a" style="left:1986.00px;top:1017.70px;width:100px;text-align:right;;transform:scaleX(0.9530);transform-origin:right center">38</div>
<div class="t a" style="left:2107.80px;top:1017.70px;width:100px;text-align:center;;transform:scaleX(0.9530);transform-origin:center center">9.75</div>
<div class="t a" style="left:2242.00px;top:1017.70px;width:100px;text-align:center;;transform:scaleX(0.9530);transform-origin:center center">4.275%</div>
<div class="t a" style="left:1986.00px;top:1039.70px;width:100px;text-align:right;;transform:scaleX(0.9530);transform-origin:right center">39</div>
<div class="t a" style="left:2107.80px;top:1039.70px;width:100px;text-align:center;;transform:scaleX(0.9530);transform-origin:center center">10.00</div>
<div class="t a" style="left:2242.00px;top:1039.70px;width:100px;text-align:center;;transform:scaleX(0.9530);transform-origin:center center">4.280%</div>
<div class="t a" style="left:1986.00px;top:1061.70px;width:100px;text-align:right;;transform:scaleX(0.9530);transform-origin:right center">40</div>
<div class="t a" style="left:2107.80px;top:1061.70px;width:100px;text-align:center;;transform:scaleX(0.9530);transform-origin:center center">10.25</div>
<div class="t a" style="left:2242.00px;top:1061.70px;width:100px;text-align:center;;transform:scaleX(0.9530);transform-origin:center center">4.287%</div>
<div class="t a" style="left:1986.00px;top:1083.70px;width:100px;text-align:right;;transform:scaleX(0.9530);transform-origin:right center">41</div>
<div class="t a" style="left:2107.80px;top:1083.70px;width:100px;text-align:center;;transform:scaleX(0.9530);transform-origin:center center">10.50</div>
<div class="t a" style="left:2242.00px;top:1083.70px;width:100px;text-align:center;;transform:scaleX(0.9530);transform-origin:center center">4.295%</div>
<div class="t a" style="left:1986.00px;top:1105.70px;width:100px;text-align:right;;transform:scaleX(0.9530);transform-origin:right center">42</div>
<div class="t a" style="left:2107.80px;top:1105.70px;width:100px;text-align:center;;transform:scaleX(0.9530);transform-origin:center center">10.75</div>
<div class="t a" style="left:2242.00px;top:1105.70px;width:100px;text-align:center;;transform:scaleX(0.9530);transform-origin:center center">4.302%</div>
<div class="t a" style="left:1986.00px;top:1127.70px;width:100px;text-align:right;;transform:scaleX(0.9530);transform-origin:right center">43</div>
<div class="t a" style="left:2107.80px;top:1127.70px;width:100px;text-align:center;;transform:scaleX(0.9530);transform-origin:center center">11.00</div>
<div class="t a" style="left:2242.00px;top:1127.70px;width:100px;text-align:center;;transform:scaleX(0.9530);transform-origin:center center">4.309%</div>
<div class="t a" style="left:1986.00px;top:1149.70px;width:100px;text-align:right;;transform:scaleX(0.9530);transform-origin:right center">44</div>
<div class="t a" style="left:2107.80px;top:1149.70px;width:100px;text-align:center;;transform:scaleX(0.9530);transform-origin:center center">11.25</div>
<div class="t a" style="left:2242.00px;top:1149.70px;width:100px;text-align:center;;transform:scaleX(0.9530);transform-origin:center center">4.316%</div>
<div class="r" style="left:36.00px;top:444.00px;width:1188.00px;height:24.00px;background:#aec9ea;border:2px solid #000;box-sizing:border-box"></div>
<div class="t cb" style="left:430.70px;top:445.50px;width:400px;text-align:center;;transform:scaleX(0.9634);transform-origin:center center">Bond Portfolio Data</div>
<div class="r" style="left:36.00px;top:488.00px;width:1188.00px;height:46.00px;background:#aec9ea"></div>
<div class="r" style="left:36.00px;top:488.00px;width:1188.00px;height:2.00px;background:#000"></div>
<div class="r" style="left:36.00px;top:532.00px;width:1188.00px;height:2.00px;background:#000"></div>
<div class="r" style="left:36.00px;top:488.00px;width:2.00px;height:596.00px;background:#000"></div>
<div class="r" style="left:1222.00px;top:488.00px;width:2.00px;height:596.00px;background:#000"></div>
<div class="r" style="left:36.00px;top:1082.00px;width:1188.00px;height:2.00px;background:#000"></div>
<div class="r" style="left:158.00px;top:488.00px;width:2.00px;height:596.00px;background:#000"></div>
<div class="r" style="left:268.30px;top:488.00px;width:2.00px;height:596.00px;background:#000"></div>
<div class="r" style="left:374.00px;top:488.00px;width:2.00px;height:46.00px;background:#000"></div>
<div class="r" style="left:480.00px;top:488.00px;width:2.00px;height:46.00px;background:#000"></div>
<div class="r" style="left:586.00px;top:488.00px;width:2.00px;height:46.00px;background:#000"></div>
<div class="r" style="left:692.00px;top:488.00px;width:2.00px;height:46.00px;background:#000"></div>
<div class="r" style="left:798.00px;top:488.00px;width:2.00px;height:46.00px;background:#000"></div>
<div class="r" style="left:904.00px;top:488.00px;width:2.00px;height:46.00px;background:#000"></div>
<div class="r" style="left:1010.00px;top:488.00px;width:2.00px;height:46.00px;background:#000"></div>
<div class="r" style="left:1116.00px;top:488.00px;width:2.00px;height:46.00px;background:#000"></div>
<div class="t cb" style="left:-2.20px;top:511.50px;width:200px;text-align:center;;transform:scaleX(1.0384);transform-origin:center center">Settlement Date</div>
<div class="t cb" style="left:114.00px;top:511.50px;width:200px;text-align:center;;transform:scaleX(1.0613);transform-origin:center center">Maturity Date</div>
<div class="t cb" style="left:221.90px;top:511.50px;width:200px;text-align:center;;transform:scaleX(0.9385);transform-origin:center center">Coupon Rate</div>
<div class="t cb" style="left:327.70px;top:489.50px;width:200px;text-align:center;;transform:scaleX(0.9671);transform-origin:center center">Payments Per</div>
<div class="t cb" style="left:328.70px;top:511.50px;width:200px;text-align:center;;transform:scaleX(0.9789);transform-origin:center center">Year</div>
<div class="t cb" style="left:432.80px;top:489.50px;width:200px;text-align:center;;transform:scaleX(0.9726);transform-origin:center center">Treasury</div>
<div class="t cb" style="left:434.00px;top:511.50px;width:200px;text-align:center;;transform:scaleX(0.8999);transform-origin:center center">Pricing</div>
<div class="t cb" style="left:539.20px;top:489.50px;width:200px;text-align:center;;transform:scaleX(1.0128);transform-origin:center center">Interpolated</div>
<div class="t cb" style="left:539.00px;top:511.50px;width:200px;text-align:center;;transform:scaleX(0.9506);transform-origin:center center">Treasury</div>
<div class="t cb" style="left:645.00px;top:489.50px;width:200px;text-align:center;;transform:scaleX(0.9639);transform-origin:center center">Credit Spread</div>
<div class="t cb" style="left:646.20px;top:511.50px;width:200px;text-align:center;;transform:scaleX(0.8940);transform-origin:center center">(Basis Points)</div>
<div class="t cb" style="left:753.10px;top:489.50px;width:200px;text-align:center;;transform:scaleX(0.9780);transform-origin:center center">Yield-to-</div>
<div class="t cb" style="left:751.70px;top:511.50px;width:200px;text-align:center;;transform:scaleX(1.0770);transform-origin:center center">Maturity</div>
<div class="t cb" style="left:858.30px;top:511.50px;width:200px;text-align:center;;transform:scaleX(0.9291);transform-origin:center center">Price (%)</div>
<div class="t cb" style="left:963.10px;top:511.50px;width:200px;text-align:center;;transform:scaleX(0.9902);transform-origin:center center">Duration</div>
<div class="t cb" style="left:1069.80px;top:511.50px;width:200px;text-align:center;;transform:scaleX(0.9346);transform-origin:center center">Bond Rating</div>
<div class="t c" style="left:37.50px;top:533.60px;width:120px;text-align:center;color:#0000f5">7<span class="s">/</span>10<span class="s">/</span>24</div>
<div class="t c" style="left:153.50px;top:533.60px;width:120px;text-align:center;color:#0000f5">7<span class="s">/</span>14<span class="s">/</span>26</div>
<div class="t c" style="left:262.00px;top:533.60px;width:120px;text-align:center;color:#0000f5">5.59%</div>
<div class="t c" style="left:368.00px;top:533.60px;width:120px;text-align:center;color:#0000f5">2</div>
<div class="t c" style="left:474.00px;top:533.60px;width:120px;text-align:center;color:#0000f5">2.00</div>
<div class="t c" style="left:580.00px;top:533.60px;width:120px;text-align:center;">4.5000</div>
<div class="t c" style="left:686.00px;top:533.60px;width:120px;text-align:center;color:#0000f5">85</div>
<div class="t c" style="left:792.00px;top:533.60px;width:120px;text-align:center;">450.850%</div>
<div class="t c" style="left:898.00px;top:533.60px;width:120px;text-align:center;">2.05</div>
<div class="t c" style="left:1004.00px;top:533.60px;width:120px;text-align:center;">0.55</div>
<div class="t c" style="left:1110.00px;top:533.60px;width:120px;text-align:center;color:#0000f5;transform:scaleX(1.0289);transform-origin:center center">AAA</div>
<div class="t c" style="left:37.50px;top:555.60px;width:120px;text-align:center;color:#0000f5">7<span class="s">/</span>10<span class="s">/</span>24</div>
<div class="t c" style="left:153.50px;top:555.60px;width:120px;text-align:center;color:#0000f5">8<span class="s">/</span>26<span class="s">/</span>28</div>
<div class="t c" style="left:262.00px;top:555.60px;width:120px;text-align:center;color:#0000f5">5.415%</div>
<div class="t c" style="left:368.00px;top:555.60px;width:120px;text-align:center;color:#0000f5">2</div>
<div class="t c" style="left:474.00px;top:555.60px;width:120px;text-align:center;color:#0000f5">3.00</div>
<div class="t c" style="left:580.00px;top:555.60px;width:120px;text-align:center;">4.4200</div>
<div class="t c" style="left:686.00px;top:555.60px;width:120px;text-align:center;color:#0000f5">88</div>
<div class="t c" style="left:792.00px;top:555.60px;width:120px;text-align:center;">442.880%</div>
<div class="t c" style="left:898.00px;top:555.60px;width:120px;text-align:center;">0.91</div>
<div class="t c" style="left:1004.00px;top:555.60px;width:120px;text-align:center;">0.36</div>
<div class="t c" style="left:1110.00px;top:555.60px;width:120px;text-align:center;color:#0000f5;transform:scaleX(1.0289);transform-origin:center center">AAA</div>
<div class="t c" style="left:37.50px;top:577.60px;width:120px;text-align:center;color:#0000f5">7<span class="s">/</span>10<span class="s">/</span>24</div>
<div class="t c" style="left:153.50px;top:577.60px;width:120px;text-align:center;color:#0000f5">10<span class="s">/</span>11<span class="s">/</span>30</div>
<div class="t c" style="left:262.00px;top:577.60px;width:120px;text-align:center;color:#0000f5">8.482%</div>
<div class="t c" style="left:368.00px;top:577.60px;width:120px;text-align:center;color:#0000f5">2</div>
<div class="t c" style="left:474.00px;top:577.60px;width:120px;text-align:center;color:#0000f5">5.50</div>
<div class="t c" style="left:580.00px;top:577.60px;width:120px;text-align:center;">4.3600</div>
<div class="t c" style="left:686.00px;top:577.60px;width:120px;text-align:center;color:#0000f5">350</div>
<div class="t c" style="left:792.00px;top:577.60px;width:120px;text-align:center;">439.500%</div>
<div class="t c" style="left:898.00px;top:577.60px;width:120px;text-align:center;">1.33</div>
<div class="t c" style="left:1004.00px;top:577.60px;width:120px;text-align:center;">0.48</div>
<div class="t c" style="left:1110.00px;top:577.60px;width:120px;text-align:center;color:#0000f5;transform:scaleX(0.8845);transform-origin:center center">BB</div>
<div class="t c" style="left:37.50px;top:599.60px;width:120px;text-align:center;color:#0000f5">7<span class="s">/</span>10<span class="s">/</span>24</div>
<div class="t c" style="left:153.50px;top:599.60px;width:120px;text-align:center;color:#0000f5">11<span class="s">/</span>26<span class="s">/</span>31</div>
<div class="t c" style="left:262.00px;top:599.60px;width:120px;text-align:center;color:#0000f5">5.883%</div>
<div class="t c" style="left:368.00px;top:599.60px;width:120px;text-align:center;color:#0000f5">2</div>
<div class="t c" style="left:474.00px;top:599.60px;width:120px;text-align:center;color:#0000f5">5.00</div>
<div class="t c" style="left:580.00px;top:599.60px;width:120px;text-align:center;">4.3800</div>
<div class="t c" style="left:686.00px;top:599.60px;width:120px;text-align:center;color:#0000f5">150</div>
<div class="t c" style="left:792.00px;top:599.60px;width:120px;text-align:center;">439.500%</div>
<div class="t c" style="left:898.00px;top:599.60px;width:120px;text-align:center;">1.06</div>
<div class="t c" style="left:1004.00px;top:599.60px;width:120px;text-align:center;">0.61</div>
<div class="t c" style="left:1110.00px;top:599.60px;width:120px;text-align:center;color:#0000f5;transform:scaleX(1.0328);transform-origin:center center">AA</div>
<div class="t c" style="left:37.50px;top:621.60px;width:120px;text-align:center;color:#0000f5">7<span class="s">/</span>10<span class="s">/</span>24</div>
<div class="t c" style="left:153.50px;top:621.60px;width:120px;text-align:center;color:#0000f5">12<span class="s">/</span>27<span class="s">/</span>35</div>
<div class="t c" style="left:262.00px;top:621.60px;width:120px;text-align:center;color:#0000f5">5.927%</div>
<div class="t c" style="left:368.00px;top:621.60px;width:120px;text-align:center;color:#0000f5">4</div>
<div class="t c" style="left:474.00px;top:621.60px;width:120px;text-align:center;color:#0000f5">10.00</div>
<div class="t c" style="left:580.00px;top:621.60px;width:120px;text-align:center;">4.1500</div>
<div class="t c" style="left:686.00px;top:621.60px;width:120px;text-align:center;color:#0000f5">225</div>
<div class="t c" style="left:792.00px;top:621.60px;width:120px;text-align:center;">417.250%</div>
<div class="t c" style="left:898.00px;top:621.60px;width:120px;text-align:center;">1.36</div>
<div class="t c" style="left:1004.00px;top:621.60px;width:120px;text-align:center;">0.45</div>
<div class="t c" style="left:1110.00px;top:621.60px;width:120px;text-align:center;color:#0000f5;transform:scaleX(1.1127);transform-origin:center center">A-</div>
<div class="t c" style="left:37.50px;top:643.60px;width:120px;text-align:center;color:#0000f5">7<span class="s">/</span>10<span class="s">/</span>24</div>
<div class="t c" style="left:153.50px;top:643.60px;width:120px;text-align:center;color:#0000f5">2<span class="s">/</span>10<span class="s">/</span>37</div>
<div class="t c" style="left:262.00px;top:643.60px;width:120px;text-align:center;color:#0000f5">7.227%</div>
<div class="t c" style="left:368.00px;top:643.60px;width:120px;text-align:center;color:#0000f5">2</div>
<div class="t c" style="left:474.00px;top:643.60px;width:120px;text-align:center;color:#0000f5">10.00</div>
<div class="t c" style="left:580.00px;top:643.60px;width:120px;text-align:center;">4.1500</div>
<div class="t c" style="left:686.00px;top:643.60px;width:120px;text-align:center;color:#0000f5">285</div>
<div class="t c" style="left:792.00px;top:643.60px;width:120px;text-align:center;">417.850%</div>
<div class="t c" style="left:898.00px;top:643.60px;width:120px;text-align:center;">1.42</div>
<div class="t c" style="left:1004.00px;top:643.60px;width:120px;text-align:center;">0.32</div>
<div class="t c" style="left:1110.00px;top:643.60px;width:120px;text-align:center;color:#0000f5;transform:scaleX(0.8670);transform-origin:center center">BBB</div>
<div class="t c" style="left:37.50px;top:665.60px;width:120px;text-align:center;color:#0000f5">7<span class="s">/</span>10<span class="s">/</span>24</div>
<div class="t c" style="left:153.50px;top:665.60px;width:120px;text-align:center;color:#0000f5">3<span class="s">/</span>29<span class="s">/</span>38</div>
<div class="t c" style="left:262.00px;top:665.60px;width:120px;text-align:center;color:#0000f5">7.138%</div>
<div class="t c" style="left:368.00px;top:665.60px;width:120px;text-align:center;color:#0000f5">4</div>
<div class="t c" style="left:474.00px;top:665.60px;width:120px;text-align:center;color:#0000f5">12.50</div>
<div class="t c" style="left:580.00px;top:665.60px;width:120px;text-align:center;">4.2175</div>
<div class="t c" style="left:686.00px;top:665.60px;width:120px;text-align:center;color:#0000f5">270</div>
<div class="t c" style="left:792.00px;top:665.60px;width:120px;text-align:center;">424.450%</div>
<div class="t c" style="left:898.00px;top:665.60px;width:120px;text-align:center;">1.62</div>
<div class="t c" style="left:1004.00px;top:665.60px;width:120px;text-align:center;">0.46</div>
<div class="t c" style="left:1110.00px;top:665.60px;width:120px;text-align:center;color:#0000f5;transform:scaleX(0.8563);transform-origin:center center">BBB+</div>
<div class="t c" style="left:37.50px;top:687.60px;width:120px;text-align:center;color:#0000f5">7<span class="s">/</span>10<span class="s">/</span>24</div>
<div class="t c" style="left:153.50px;top:687.60px;width:120px;text-align:center;color:#0000f5">4<span class="s">/</span>12<span class="s">/</span>29</div>
<div class="t c" style="left:262.00px;top:687.60px;width:120px;text-align:center;color:#0000f5">6.885%</div>
<div class="t c" style="left:368.00px;top:687.60px;width:120px;text-align:center;color:#0000f5">2</div>
<div class="t c" style="left:474.00px;top:687.60px;width:120px;text-align:center;color:#0000f5">3.00</div>
<div class="t c" style="left:580.00px;top:687.60px;width:120px;text-align:center;">4.4200</div>
<div class="t c" style="left:686.00px;top:687.60px;width:120px;text-align:center;color:#0000f5">275</div>
<div class="t c" style="left:792.00px;top:687.60px;width:120px;text-align:center;">444.750%</div>
<div class="t c" style="left:898.00px;top:687.60px;width:120px;text-align:center;">1.06</div>
<div class="t c" style="left:1004.00px;top:687.60px;width:120px;text-align:center;">0.48</div>
<div class="t c" style="left:1110.00px;top:687.60px;width:120px;text-align:center;color:#0000f5;transform:scaleX(1.0338);transform-origin:center center">A</div>
<div class="t c" style="left:37.50px;top:709.60px;width:120px;text-align:center;color:#0000f5">7<span class="s">/</span>10<span class="s">/</span>24</div>
<div class="t c" style="left:153.50px;top:709.60px;width:120px;text-align:center;color:#0000f5">4<span class="s">/</span>13<span class="s">/</span>30</div>
<div class="t c" style="left:262.00px;top:709.60px;width:120px;text-align:center;color:#0000f5">10.750%</div>
<div class="t c" style="left:368.00px;top:709.60px;width:120px;text-align:center;color:#0000f5">2</div>
<div class="t c" style="left:474.00px;top:709.60px;width:120px;text-align:center;color:#0000f5">15.00</div>
<div class="t c" style="left:580.00px;top:709.60px;width:120px;text-align:center;">4.2850</div>
<div class="t c" style="left:686.00px;top:709.60px;width:120px;text-align:center;color:#0000f5">625</div>
<div class="t c" style="left:792.00px;top:709.60px;width:120px;text-align:center;">434.750%</div>
<div class="t c" style="left:898.00px;top:709.60px;width:120px;text-align:center;">1.72</div>
<div class="t c" style="left:1004.00px;top:709.60px;width:120px;text-align:center;">0.49</div>
<div class="t c" style="left:1110.00px;top:709.60px;width:120px;text-align:center;color:#0000f5;transform:scaleX(0.8739);transform-origin:center center">BB-</div>
<div class="t c" style="left:37.50px;top:731.60px;width:120px;text-align:center;color:#0000f5">7<span class="s">/</span>10<span class="s">/</span>24</div>
<div class="t c" style="left:153.50px;top:731.60px;width:120px;text-align:center;color:#0000f5">4<span class="s">/</span>12<span class="s">/</span>28</div>
<div class="t c" style="left:262.00px;top:731.60px;width:120px;text-align:center;color:#0000f5">10.685%</div>
<div class="t c" style="left:368.00px;top:731.60px;width:120px;text-align:center;color:#0000f5">2</div>
<div class="t c" style="left:474.00px;top:731.60px;width:120px;text-align:center;color:#0000f5">3.00</div>
<div class="t c" style="left:580.00px;top:731.60px;width:120px;text-align:center;">4.4200</div>
<div class="t c" style="left:686.00px;top:731.60px;width:120px;text-align:center;color:#0000f5">595</div>
<div class="t c" style="left:792.00px;top:731.60px;width:120px;text-align:center;">447.950%</div>
<div class="t c" style="left:898.00px;top:731.60px;width:120px;text-align:center;">1.64</div>
<div class="t c" style="left:1004.00px;top:731.60px;width:120px;text-align:center;">0.49</div>
<div class="t c" style="left:1110.00px;top:731.60px;width:120px;text-align:center;color:#0000f5;transform:scaleX(0.8739);transform-origin:center center">BB-</div>
<div class="t c" style="left:37.50px;top:753.60px;width:120px;text-align:center;color:#0000f5">7<span class="s">/</span>10<span class="s">/</span>24</div>
<div class="t c" style="left:153.50px;top:753.60px;width:120px;text-align:center;color:#0000f5">4<span class="s">/</span>13<span class="s">/</span>35</div>
<div class="t c" style="left:262.00px;top:753.60px;width:120px;text-align:center;color:#0000f5">8.127%</div>
<div class="t c" style="left:368.00px;top:753.60px;width:120px;text-align:center;color:#0000f5">2</div>
<div class="t c" style="left:474.00px;top:753.60px;width:120px;text-align:center;color:#0000f5">7.00</div>
<div class="t c" style="left:580.00px;top:753.60px;width:120px;text-align:center;">4.0900</div>
<div class="t c" style="left:686.00px;top:753.60px;width:120px;text-align:center;color:#0000f5">375</div>
<div class="t c" style="left:792.00px;top:753.60px;width:120px;text-align:center;">412.750%</div>
<div class="t c" style="left:898.00px;top:753.60px;width:120px;text-align:center;">1.42</div>
<div class="t c" style="left:1004.00px;top:753.60px;width:120px;text-align:center;">0.50</div>
<div class="t c" style="left:1110.00px;top:753.60px;width:120px;text-align:center;color:#0000f5;transform:scaleX(1.1127);transform-origin:center center">A-</div>
<div class="t c" style="left:37.50px;top:775.60px;width:120px;text-align:center;color:#0000f5">7<span class="s">/</span>10<span class="s">/</span>24</div>
<div class="t c" style="left:153.50px;top:775.60px;width:120px;text-align:center;color:#0000f5">4<span class="s">/</span>12<span class="s">/</span>41</div>
<div class="t c" style="left:262.00px;top:775.60px;width:120px;text-align:center;color:#0000f5">10.877%</div>
<div class="t c" style="left:368.00px;top:775.60px;width:120px;text-align:center;color:#0000f5">2</div>
<div class="t c" style="left:474.00px;top:775.60px;width:120px;text-align:center;color:#0000f5">9.50</div>
<div class="t c" style="left:580.00px;top:775.60px;width:120px;text-align:center;">4.1400</div>
<div class="t c" style="left:686.00px;top:775.60px;width:120px;text-align:center;color:#0000f5">650</div>
<div class="t c" style="left:792.00px;top:775.60px;width:120px;text-align:center;">420.500%</div>
<div class="t c" style="left:898.00px;top:775.60px;width:120px;text-align:center;">1.84</div>
<div class="t c" style="left:1004.00px;top:775.60px;width:120px;text-align:center;">0.49</div>
<div class="t c" style="left:1110.00px;top:775.60px;width:120px;text-align:center;color:#0000f5;transform:scaleX(0.8941);transform-origin:center center">NR</div>
<div class="t c" style="left:37.50px;top:797.60px;width:120px;text-align:center;color:#0000f5">7<span class="s">/</span>10<span class="s">/</span>24</div>
<div class="t c" style="left:153.50px;top:797.60px;width:120px;text-align:center;color:#0000f5">4<span class="s">/</span>12<span class="s">/</span>45</div>
<div class="t c" style="left:262.00px;top:797.60px;width:120px;text-align:center;color:#0000f5">6.550%</div>
<div class="t c" style="left:368.00px;top:797.60px;width:120px;text-align:center;color:#0000f5">4</div>
<div class="t c" style="left:474.00px;top:797.60px;width:120px;text-align:center;color:#0000f5">15.00</div>
<div class="t c" style="left:580.00px;top:797.60px;width:120px;text-align:center;">4.2850</div>
<div class="t c" style="left:686.00px;top:797.60px;width:120px;text-align:center;color:#0000f5">145</div>
<div class="t c" style="left:792.00px;top:797.60px;width:120px;text-align:center;">429.950%</div>
<div class="t c" style="left:898.00px;top:797.60px;width:120px;text-align:center;">1.51</div>
<div class="t c" style="left:1004.00px;top:797.60px;width:120px;text-align:center;">0.24</div>
<div class="t c" style="left:1110.00px;top:797.60px;width:120px;text-align:center;color:#0000f5;transform:scaleX(1.0447);transform-origin:center center">AA+</div>
<div class="t c" style="left:37.50px;top:819.60px;width:120px;text-align:center;color:#0000f5">7<span class="s">/</span>10<span class="s">/</span>24</div>
<div class="t c" style="left:153.50px;top:819.60px;width:120px;text-align:center;color:#0000f5">4<span class="s">/</span>12<span class="s">/</span>41</div>
<div class="t c" style="left:262.00px;top:819.60px;width:120px;text-align:center;color:#0000f5">9.626%</div>
<div class="t c" style="left:368.00px;top:819.60px;width:120px;text-align:center;color:#0000f5">2</div>
<div class="t c" style="left:474.00px;top:819.60px;width:120px;text-align:center;color:#0000f5">12.00</div>
<div class="t c" style="left:580.00px;top:819.60px;width:120px;text-align:center;">4.2040</div>
<div class="t c" style="left:686.00px;top:819.60px;width:120px;text-align:center;color:#0000f5">500</div>
<div class="t c" style="left:792.00px;top:819.60px;width:120px;text-align:center;">425.400%</div>
<div class="t c" style="left:898.00px;top:819.60px;width:120px;text-align:center;">1.60</div>
<div class="t c" style="left:1004.00px;top:819.60px;width:120px;text-align:center;">0.49</div>
<div class="t c" style="left:1110.00px;top:819.60px;width:120px;text-align:center;color:#0000f5;transform:scaleX(0.8845);transform-origin:center center">BB</div>
<div class="t c" style="left:37.50px;top:841.60px;width:120px;text-align:center;color:#0000f5">7<span class="s">/</span>10<span class="s">/</span>24</div>
<div class="t c" style="left:153.50px;top:841.60px;width:120px;text-align:center;color:#0000f5">4<span class="s">/</span>13<span class="s">/</span>42</div>
<div class="t c" style="left:262.00px;top:841.60px;width:120px;text-align:center;color:#0000f5">5.800%</div>
<div class="t c" style="left:368.00px;top:841.60px;width:120px;text-align:center;color:#0000f5">2</div>
<div class="t c" style="left:474.00px;top:841.60px;width:120px;text-align:center;color:#0000f5">15.00</div>
<div class="t c" style="left:580.00px;top:841.60px;width:120px;text-align:center;">4.2850</div>
<div class="t c" style="left:686.00px;top:841.60px;width:120px;text-align:center;color:#0000f5">180</div>
<div class="t c" style="left:792.00px;top:841.60px;width:120px;text-align:center;">430.300%</div>
<div class="t c" style="left:898.00px;top:841.60px;width:120px;text-align:center;">0.95</div>
<div class="t c" style="left:1004.00px;top:841.60px;width:120px;text-align:center;">0.49</div>
<div class="t c" style="left:1110.00px;top:841.60px;width:120px;text-align:center;color:#0000f5;transform:scaleX(1.0826);transform-origin:center center">AA-</div>
<div class="t c" style="left:37.50px;top:863.60px;width:120px;text-align:center;color:#0000f5">7<span class="s">/</span>10<span class="s">/</span>24</div>
<div class="t c" style="left:153.50px;top:863.60px;width:120px;text-align:center;color:#0000f5">4<span class="s">/</span>13<span class="s">/</span>30</div>
<div class="t c" style="left:262.00px;top:863.60px;width:120px;text-align:center;color:#0000f5">7.940%</div>
<div class="t c" style="left:368.00px;top:863.60px;width:120px;text-align:center;color:#0000f5">4</div>
<div class="t c" style="left:474.00px;top:863.60px;width:120px;text-align:center;color:#0000f5">4.25</div>
<div class="t c" style="left:580.00px;top:863.60px;width:120px;text-align:center;">4.4100</div>
<div class="t c" style="left:686.00px;top:863.60px;width:120px;text-align:center;color:#0000f5">350</div>
<div class="t c" style="left:792.00px;top:863.60px;width:120px;text-align:center;">444.500%</div>
<div class="t c" style="left:898.00px;top:863.60px;width:120px;text-align:center;">1.76</div>
<div class="t c" style="left:1004.00px;top:863.60px;width:120px;text-align:center;">0.23</div>
<div class="t c" style="left:1110.00px;top:863.60px;width:120px;text-align:center;color:#0000f5;transform:scaleX(0.8563);transform-origin:center center">BBB+</div>
<div class="t c" style="left:37.50px;top:885.60px;width:120px;text-align:center;color:#0000f5">7<span class="s">/</span>10<span class="s">/</span>24</div>
<div class="t c" style="left:153.50px;top:885.60px;width:120px;text-align:center;color:#0000f5">4<span class="s">/</span>12<span class="s">/</span>44</div>
<div class="t c" style="left:262.00px;top:885.60px;width:120px;text-align:center;color:#0000f5">8.250%</div>
<div class="t c" style="left:368.00px;top:885.60px;width:120px;text-align:center;color:#0000f5">2</div>
<div class="t c" style="left:474.00px;top:885.60px;width:120px;text-align:center;color:#0000f5">15.00</div>
<div class="t c" style="left:580.00px;top:885.60px;width:120px;text-align:center;">4.2850</div>
<div class="t c" style="left:686.00px;top:885.60px;width:120px;text-align:center;color:#0000f5">375</div>
<div class="t c" style="left:792.00px;top:885.60px;width:120px;text-align:center;">432.250%</div>
<div class="t c" style="left:898.00px;top:885.60px;width:120px;text-align:center;">1.33</div>
<div class="t c" style="left:1004.00px;top:885.60px;width:120px;text-align:center;">0.49</div>
<div class="t c" style="left:1110.00px;top:885.60px;width:120px;text-align:center;color:#0000f5;transform:scaleX(0.8670);transform-origin:center center">BBB</div>
<div class="t c" style="left:37.50px;top:907.60px;width:120px;text-align:center;color:#0000f5">7<span class="s">/</span>10<span class="s">/</span>24</div>
<div class="t c" style="left:153.50px;top:907.60px;width:120px;text-align:center;color:#0000f5">4<span class="s">/</span>12<span class="s">/</span>41</div>
<div class="t c" style="left:262.00px;top:907.60px;width:120px;text-align:center;color:#0000f5">8.700%</div>
<div class="t c" style="left:368.00px;top:907.60px;width:120px;text-align:center;color:#0000f5">2</div>
<div class="t c" style="left:474.00px;top:907.60px;width:120px;text-align:center;color:#0000f5">15.00</div>
<div class="t c" style="left:580.00px;top:907.60px;width:120px;text-align:center;">4.2850</div>
<div class="t c" style="left:686.00px;top:907.60px;width:120px;text-align:center;color:#0000f5">400</div>
<div class="t c" style="left:792.00px;top:907.60px;width:120px;text-align:center;">432.500%</div>
<div class="t c" style="left:898.00px;top:907.60px;width:120px;text-align:center;">1.41</div>
<div class="t c" style="left:1004.00px;top:907.60px;width:120px;text-align:center;">0.49</div>
<div class="t c" style="left:1110.00px;top:907.60px;width:120px;text-align:center;color:#0000f5;transform:scaleX(0.8775);transform-origin:center center">BBB-</div>
<div class="t c" style="left:37.50px;top:929.60px;width:120px;text-align:center;color:#0000f5">7<span class="s">/</span>10<span class="s">/</span>24</div>
<div class="t c" style="left:153.50px;top:929.60px;width:120px;text-align:center;color:#0000f5">4<span class="s">/</span>12<span class="s">/</span>45</div>
<div class="t c" style="left:262.00px;top:929.60px;width:120px;text-align:center;color:#0000f5">5.400%</div>
<div class="t c" style="left:368.00px;top:929.60px;width:120px;text-align:center;color:#0000f5">2</div>
<div class="t c" style="left:474.00px;top:929.60px;width:120px;text-align:center;color:#0000f5">15.00</div>
<div class="t c" style="left:580.00px;top:929.60px;width:120px;text-align:center;">4.2850</div>
<div class="t c" style="left:686.00px;top:929.60px;width:120px;text-align:center;color:#0000f5">90</div>
<div class="t c" style="left:792.00px;top:929.60px;width:120px;text-align:center;">429.400%</div>
<div class="t c" style="left:898.00px;top:929.60px;width:120px;text-align:center;">0.88</div>
<div class="t c" style="left:1004.00px;top:929.60px;width:120px;text-align:center;">0.49</div>
<div class="t c" style="left:1110.00px;top:929.60px;width:120px;text-align:center;color:#0000f5;transform:scaleX(1.0493);transform-origin:center center">AAA-</div>
<div class="t c" style="left:37.50px;top:951.60px;width:120px;text-align:center;color:#0000f5">7<span class="s">/</span>10<span class="s">/</span>24</div>
<div class="t c" style="left:153.50px;top:951.60px;width:120px;text-align:center;color:#0000f5">7<span class="s">/</span>13<span class="s">/</span>45</div>
<div class="t c" style="left:262.00px;top:951.60px;width:120px;text-align:center;color:#0000f5">9.122%</div>
<div class="t c" style="left:368.00px;top:951.60px;width:120px;text-align:center;color:#0000f5">1</div>
<div class="t c" style="left:474.00px;top:951.60px;width:120px;text-align:center;color:#0000f5">20.00</div>
<div class="t c" style="left:580.00px;top:951.60px;width:120px;text-align:center;">4.4200</div>
<div class="t c" style="left:686.00px;top:951.60px;width:120px;text-align:center;color:#0000f5">390</div>
<div class="t c" style="left:792.00px;top:951.60px;width:120px;text-align:center;">445.900%</div>
<div class="t c" style="left:898.00px;top:951.60px;width:120px;text-align:center;">1.96</div>
<div class="t c" style="left:1004.00px;top:951.60px;width:120px;text-align:center;">0.23</div>
<div class="t c" style="left:1110.00px;top:951.60px;width:120px;text-align:center;color:#0000f5;transform:scaleX(0.8756);transform-origin:center center">BB+</div>
<div class="t c" style="left:37.50px;top:973.60px;width:120px;text-align:center;color:#0000f5">7<span class="s">/</span>10<span class="s">/</span>24</div>
<div class="t c" style="left:153.50px;top:973.60px;width:120px;text-align:center;color:#0000f5">7<span class="s">/</span>27<span class="s">/</span>48</div>
<div class="t c" style="left:262.00px;top:973.60px;width:120px;text-align:center;color:#0000f5">10.582%</div>
<div class="t c" style="left:368.00px;top:973.60px;width:120px;text-align:center;color:#0000f5">2</div>
<div class="t c" style="left:474.00px;top:973.60px;width:120px;text-align:center;color:#0000f5">24.00</div>
<div class="t c" style="left:580.00px;top:973.60px;width:120px;text-align:center;">4.3880</div>
<div class="t c" style="left:686.00px;top:973.60px;width:120px;text-align:center;color:#0000f5">600</div>
<div class="t c" style="left:792.00px;top:973.60px;width:120px;text-align:center;">444.800%</div>
<div class="t c" style="left:898.00px;top:973.60px;width:120px;text-align:center;">2.08</div>
<div class="t c" style="left:1004.00px;top:973.60px;width:120px;text-align:center;">0.27</div>
<div class="t c" style="left:1110.00px;top:973.60px;width:120px;text-align:center;color:#0000f5;transform:scaleX(0.8941);transform-origin:center center">NR</div>
<div class="t c" style="left:37.50px;top:995.60px;width:120px;text-align:center;color:#0000f5">7<span class="s">/</span>10<span class="s">/</span>24</div>
<div class="t c" style="left:153.50px;top:995.60px;width:120px;text-align:center;color:#0000f5">9<span class="s">/</span>11<span class="s">/</span>49</div>
<div class="t c" style="left:262.00px;top:995.60px;width:120px;text-align:center;color:#0000f5">6.177%</div>
<div class="t c" style="left:368.00px;top:995.60px;width:120px;text-align:center;color:#0000f5">2</div>
<div class="t c" style="left:474.00px;top:995.60px;width:120px;text-align:center;color:#0000f5">10.00</div>
<div class="t c" style="left:580.00px;top:995.60px;width:120px;text-align:center;">4.1500</div>
<div class="t c" style="left:686.00px;top:995.60px;width:120px;text-align:center;color:#0000f5">250</div>
<div class="t c" style="left:792.00px;top:995.60px;width:120px;text-align:center;">417.500%</div>
<div class="t c" style="left:898.00px;top:995.60px;width:120px;text-align:center;">1.08</div>
<div class="t c" style="left:1004.00px;top:995.60px;width:120px;text-align:center;">0.41</div>
<div class="t c" style="left:1110.00px;top:995.60px;width:120px;text-align:center;color:#0000f5;transform:scaleX(1.0338);transform-origin:center center">A</div>
<div class="t c" style="left:37.50px;top:1017.60px;width:120px;text-align:center;color:#0000f5">7<span class="s">/</span>10<span class="s">/</span>24</div>
<div class="t c" style="left:153.50px;top:1017.60px;width:120px;text-align:center;color:#0000f5">11<span class="s">/</span>11<span class="s">/</span>51</div>
<div class="t c" style="left:262.00px;top:1017.60px;width:120px;text-align:center;color:#0000f5">7.222%</div>
<div class="t c" style="left:368.00px;top:1017.60px;width:120px;text-align:center;color:#0000f5">4</div>
<div class="t c" style="left:474.00px;top:1017.60px;width:120px;text-align:center;color:#0000f5">25.00</div>
<div class="t c" style="left:580.00px;top:1017.60px;width:120px;text-align:center;">4.3800</div>
<div class="t c" style="left:686.00px;top:1017.60px;width:120px;text-align:center;color:#0000f5">245</div>
<div class="t c" style="left:792.00px;top:1017.60px;width:120px;text-align:center;">440.450%</div>
<div class="t c" style="left:898.00px;top:1017.60px;width:120px;text-align:center;">1.48</div>
<div class="t c" style="left:1004.00px;top:1017.60px;width:120px;text-align:center;">0.31</div>
<div class="t c" style="left:1110.00px;top:1017.60px;width:120px;text-align:center;color:#0000f5;transform:scaleX(1.0167);transform-origin:center center">A+</div>
<div class="t c" style="left:37.50px;top:1039.60px;width:120px;text-align:center;color:#0000f5">7<span class="s">/</span>10<span class="s">/</span>24</div>
<div class="t c" style="left:153.50px;top:1039.60px;width:120px;text-align:center;color:#0000f5">12<span class="s">/</span>27<span class="s">/</span>53</div>
<div class="t c" style="left:262.00px;top:1039.60px;width:120px;text-align:center;color:#0000f5">6.322%</div>
<div class="t c" style="left:368.00px;top:1039.60px;width:120px;text-align:center;color:#0000f5">2</div>
<div class="t c" style="left:474.00px;top:1039.60px;width:120px;text-align:center;color:#0000f5">25.00</div>
<div class="t c" style="left:580.00px;top:1039.60px;width:120px;text-align:center;">4.3800</div>
<div class="t c" style="left:686.00px;top:1039.60px;width:120px;text-align:center;color:#0000f5">175</div>
<div class="t c" style="left:792.00px;top:1039.60px;width:120px;text-align:center;">439.750%</div>
<div class="t c" style="left:898.00px;top:1039.60px;width:120px;text-align:center;">1.34</div>
<div class="t c" style="left:1004.00px;top:1039.60px;width:120px;text-align:center;">0.69</div>
<div class="t c" style="left:1110.00px;top:1039.60px;width:120px;text-align:center;color:#0000f5;transform:scaleX(1.0826);transform-origin:center center">AA-</div>
<div class="t c" style="left:37.50px;top:1061.60px;width:120px;text-align:center;color:#0000f5">7<span class="s">/</span>10<span class="s">/</span>24</div>
<div class="t c" style="left:153.50px;top:1061.60px;width:120px;text-align:center;color:#0000f5">1<span class="s">/</span>27<span class="s">/</span>55</div>
<div class="t c" style="left:262.00px;top:1061.60px;width:120px;text-align:center;color:#0000f5">5.772%</div>
<div class="t c" style="left:368.00px;top:1061.60px;width:120px;text-align:center;color:#0000f5">4</div>
<div class="t c" style="left:474.00px;top:1061.60px;width:120px;text-align:center;color:#0000f5">30.00</div>
<div class="t c" style="left:580.00px;top:1061.60px;width:120px;text-align:center;">4.3400</div>
<div class="t c" style="left:686.00px;top:1061.60px;width:120px;text-align:center;color:#0000f5">105</div>
<div class="t c" style="left:792.00px;top:1061.60px;width:120px;text-align:center;">435.050%</div>
<div class="t c" style="left:898.00px;top:1061.60px;width:120px;text-align:center;">1.24</div>
<div class="t c" style="left:1004.00px;top:1061.60px;width:120px;text-align:center;">0.28</div>
<div class="t c" style="left:1110.00px;top:1061.60px;width:120px;text-align:center;color:#0000f5;transform:scaleX(1.0493);transform-origin:center center">AAA-</div>
</div></body></html>
